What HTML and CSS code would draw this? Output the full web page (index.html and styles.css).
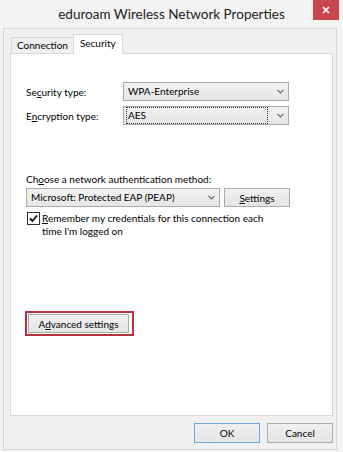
FILE: index.html
```html
<!DOCTYPE html>
<html lang="en">
<head>
  <meta charset="UTF-8">
  <meta name="viewport" content="width=device-width, initial-scale=1.0">
  <title>eduroam Wireless Network Properties</title>
  <link rel="stylesheet" href="styles.css">
</head>
<body>
  <div class="window">
    <div class="titlebar">
      <span class="title">eduroam Wireless Network Properties</span>
      <button class="close" aria-label="Close">
        <svg width="8" height="8" viewBox="0 0 8 8"><path d="M1 1L7 7M7 1L1 7" stroke="#fff" stroke-width="1.6"/></svg>
      </button>
    </div>

    <div class="client">
      <div class="tabs">
        <div class="tab">Connection</div>
        <div class="tab active">Security</div>
      </div>

      <div class="panel">
        <div class="field-row">
          <span class="label">Se<u>c</u>urity type:</span>
          <div class="select wide">
            <span class="value">WPA-Enterprise</span>
            <svg class="chev" width="7" height="5" viewBox="0 0 7 5"><path d="M0.5 0.8L3.5 3.8L6.5 0.8" fill="none" stroke="#666" stroke-width="1.2"/></svg>
          </div>
        </div>
        <div class="field-row">
          <span class="label">E<u>n</u>cryption type:</span>
          <div class="select wide">
            <span class="value focus">AES</span>
            <svg class="chev" width="7" height="5" viewBox="0 0 7 5"><path d="M0.5 0.8L3.5 3.8L6.5 0.8" fill="none" stroke="#666" stroke-width="1.2"/></svg>
          </div>
        </div>

        <div class="auth-label">Ch<u>o</u>ose a network authentication method:</div>
        <div class="auth-row">
          <div class="select method">
            <span class="value">Microsoft: Protected EAP (PEAP)</span>
            <svg class="chev" width="7" height="5" viewBox="0 0 7 5"><path d="M0.5 0.8L3.5 3.8L6.5 0.8" fill="none" stroke="#666" stroke-width="1.2"/></svg>
          </div>
          <button class="btn settings"><u>S</u>ettings</button>
        </div>

        <div class="check-row">
          <span class="checkbox">
            <svg width="11" height="11" viewBox="0 0 11 11"><path d="M2 5.5L4.5 8L9 2.5" fill="none" stroke="#111" stroke-width="1.8"/></svg>
          </span>
          <p class="check-text">Remember my credentials for this connection each time I'm logged on</p>
        </div>

        <div class="highlight">
          <button class="btn advanced">A<u>d</u>vanced settings</button>
        </div>
      </div>

      <div class="footer">
        <button class="btn default">OK</button>
        <button class="btn">Cancel</button>
      </div>
    </div>
  </div>
</body>
</html>
```

FILE: styles.css
```css
* {
  box-sizing: border-box;
}
body {
  margin: 0;
  font-family: Lato, 'Liberation Sans', sans-serif;
  font-size: 10px;
  color: #000;
  background-color: #f3f3f3;
}
u {
  text-decoration-thickness: 1px;
  text-underline-offset: 1px;
}
.window {
  width: 343px;
  height: 452px;
  background-color: #f3f3f3;
}
.titlebar {
  height: 28px;
  display: grid;
  grid-template-columns: 1fr auto 1fr;
}
.title {
  grid-column: 2;
  align-self: center;
  font-size: 13.5px;
  color: #222;
  line-height: 28px;
}
.close {
  grid-column: 3;
  justify-self: end;
  align-self: start;
  width: 26px;
  height: 20px;
  margin-right: 4px;
  padding: 0;
  border: none;
  background-color: #c7474d;
  display: flex;
  align-items: center;
  justify-content: center;
}
.client {
  margin: 0 6px 0 3px;
  height: 422px;
  border: 1px solid #d6d6d6;
  background-color: #f0f0f0;
  padding: 5px 3px 6px 6px;
  display: flex;
  flex-direction: column;
}
.tabs {
  display: flex;
  align-items: flex-end;
  height: 19px;
  padding-left: 1px;
}
.tab {
  height: 16px;
  line-height: 15px;
  padding: 0 5px;
  border: 1px solid #d9d9d9;
  border-bottom: none;
  background-color: #f0f0f0;
}
.tab.active {
  position: relative;
  z-index: 1;
  height: 20px;
  line-height: 17px;
  margin-bottom: -1px;
  margin-left: -1px;
  padding: 0 6px;
  background-color: #fff;
}
.panel {
  height: 363px;
  border: 1px solid #d9d9d9;
  background-color: #fff;
  padding: 28px 15px 0 15px;
}
.field-row {
  display: flex;
  align-items: center;
  margin-bottom: 5px;
}
.label {
  width: 97px;
}
.select {
  height: 19px;
  border: 1px solid #acacac;
  background: linear-gradient(#f2f2f2, #e6e6e6);
  display: flex;
  align-items: center;
  padding: 0 4px 0 2px;
}
.select.wide {
  width: 166px;
}
.select.method {
  width: 194px;
}
.value {
  flex: 1;
  padding-left: 2px;
  line-height: 15px;
  white-space: nowrap;
}
.value.focus {
  border: 1px dotted #333;
  margin-right: 5px;
  padding-left: 1px;
}
.chev {
  flex: none;
  margin-left: 4px;
}
.auth-label {
  margin-top: 48px;
  line-height: 13px;
  margin-bottom: 2px;
}
.auth-row {
  display: flex;
  gap: 4px;
  align-items: center;
}
.btn {
  font-family: inherit;
  font-size: inherit;
  color: #000;
  height: 19px;
  padding: 0;
  border: 1px solid #acacac;
  background: linear-gradient(#f0f0f0, #e5e5e5);
}
.btn.settings {
  width: 66px;
}
.check-row {
  display: flex;
  align-items: flex-start;
  gap: 2px;
  margin-top: 5px;
  margin-left: 1px;
  width: 250px;
}
.check-text {
  margin: 0;
  line-height: 13px;
}
.check-text::first-letter {
  text-decoration: underline;
}
.checkbox {
  flex: none;
  width: 13px;
  height: 13px;
  border: 1px solid #333;
  background-color: #fff;
  display: flex;
  align-items: center;
  justify-content: center;
}
.highlight {
  margin-top: 73px;
  margin-left: -1px;
  width: 109px;
  border: 2px solid #b8323b;
  padding: 1px;
}
.btn.advanced {
  display: block;
  width: 101px;
}
.footer {
  display: flex;
  justify-content: flex-end;
  gap: 7px;
  margin-top: 7px;
}
.footer .btn {
  width: 66px;
  height: 20px;
}
.footer .btn.default {
  border-color: #6ea6dd;
}
```
